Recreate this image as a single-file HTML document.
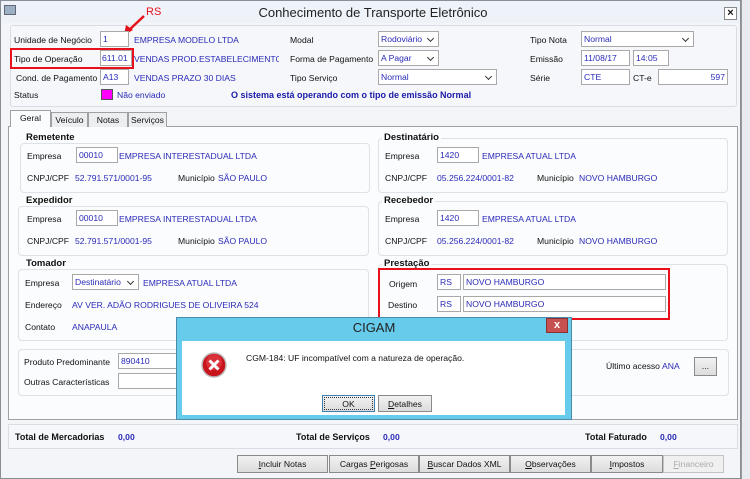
<!DOCTYPE html><html><head><meta charset="utf-8"><style>
*{box-sizing:border-box;margin:0;padding:0}
body{width:750px;height:479px;overflow:hidden;background:#dfe3e8;font-family:"Liberation Sans",sans-serif;font-size:8.6px;color:#111;position:relative}
.a{position:absolute;white-space:nowrap}
.b{color:#2a2ab8}
.in{position:absolute;background:#fff;border:1px solid #a9a9a9;color:#2a2ab8;padding:2px 2px;height:16px;line-height:11px;white-space:nowrap;overflow:hidden}
.sel:after{content:"";position:absolute;right:5px;top:4px;width:4px;height:4px;border-right:1px solid #333;border-bottom:1px solid #333;transform:rotate(45deg)}
.grp{position:absolute;border:1px solid #dde2e8;border-radius:4px;background:#fbfcfd}
.gt{position:absolute;font-weight:bold;font-size:9.5px;background:#fbfcfd;padding:0 2px}
.btn{position:absolute;top:455px;height:18px;border:1px solid #8a8a8a;background:linear-gradient(#f2f2f2,#dcdcdc);text-align:center;line-height:16px;font-size:8.6px}
.red{position:absolute;border:2px solid #e8101a}
.tab{position:absolute;top:112px;height:15px;border:1px solid #a0a0a0;border-bottom:none;background:#eceef0;text-align:center;line-height:14px}
</style></head><body>
<div class="a" style="left:0;top:0;width:741px;height:479px;background:#f3f5f8;border:1px solid #8a8f96"></div>
<div class="a" style="left:1px;top:1px;width:739px;height:22px;background:#eef3fa"></div>
<div class="a" style="left:4px;top:5px;width:12px;height:10px;background:#9cb0c4;border:1px solid #667"></div>
<div class="a" style="left:0;width:746px;top:5px;text-align:center;font-size:13px;color:#222">Conhecimento de Transporte Eletrônico</div>
<div class="a" style="left:724px;top:7px;width:13px;height:13px;border:1px solid #888;background:#fff;font-weight:bold;font-size:11px;line-height:11px;text-align:center">×</div>
<div class="a" style="left:741px;top:0;width:9px;height:479px;background:#e8ebef;border-left:1px solid #999"></div>
<div class="a" style="left:10px;top:25px;width:727px;height:82px;border:1px solid #d8dde3;border-radius:3px;background:#f5f7fa"></div>
<div class="a" style="left:146px;top:6px;color:#e8101a;font-size:11px">RS</div>
<svg class="a" style="left:122px;top:14px" width="26" height="22"><line x1="22" y1="2" x2="6" y2="17" stroke="#e8101a" stroke-width="2.5"/><polygon points="2,21 4,11 11,16" fill="#e8101a"/></svg>
<div class="a" style="left:14px;top:35px">Unidade de Negócio</div>
<div class="in" style="left:100px;top:31px;width:29px">1</div>
<div class="a b" style="left:134px;top:35px">EMPRESA MODELO LTDA</div>
<div class="a" style="left:14px;top:54px">Tipo de Operação</div>
<div class="in" style="left:100px;top:50px;width:32px;padding:2px 1px">611.01</div>
<div class="a b" style="left:134px;top:54px;width:145px;overflow:hidden">VENDAS PROD.ESTABELECIMENTO (IC</div>
<div class="red" style="left:10px;top:48px;width:124px;height:21px"></div>
<div class="a" style="left:16px;top:73px">Cond. de Pagamento</div>
<div class="in" style="left:100px;top:69px;width:29px">A13</div>
<div class="a b" style="left:134px;top:73px">VENDAS PRAZO 30 DIAS</div>
<div class="a" style="left:14px;top:90px">Status</div>
<div class="a" style="left:101px;top:89px;width:12px;height:11px;background:#f0f;border:1px solid #555"></div>
<div class="a b" style="left:117px;top:90px">Não enviado</div>
<div class="a" style="left:231px;top:90px;color:#1a1aa8;font-weight:bold;font-size:9px">O sistema está operando com o tipo de emissão Normal</div>
<div class="a" style="left:290px;top:35px">Modal</div>
<div class="in sel" style="left:378px;top:31px;width:61px">Rodoviário</div>
<div class="a" style="left:290px;top:54px">Forma de Pagamento</div>
<div class="in sel" style="left:378px;top:50px;width:61px">A Pagar</div>
<div class="a" style="left:290px;top:73px">Tipo Serviço</div>
<div class="in sel" style="left:378px;top:69px;width:119px">Normal</div>
<div class="a" style="left:530px;top:35px">Tipo Nota</div>
<div class="in sel" style="left:581px;top:31px;width:113px">Normal</div>
<div class="a" style="left:530px;top:54px">Emissão</div>
<div class="in" style="left:581px;top:50px;width:49px">11/08/17</div>
<div class="in" style="left:633px;top:50px;width:36px">14:05</div>
<div class="a" style="left:530px;top:73px">Série</div>
<div class="in" style="left:581px;top:69px;width:49px">CTE</div>
<div class="a" style="left:633px;top:73px">CT-e</div>
<div class="in" style="left:658px;top:69px;width:70px;text-align:right">597</div>
<div class="a" style="left:8px;top:126px;width:730px;height:294px;border:1px solid #a0a0a0;background:#fbfcfd"></div>
<div class="tab" style="left:10px;width:41px;top:110px;height:17px;background:#fbfcfd">Geral</div>
<div class="tab" style="left:51px;width:37px">Veículo</div>
<div class="tab" style="left:88px;width:40px">Notas</div>
<div class="tab" style="left:128px;width:39px">Serviços</div>
<div class="grp" style="left:20px;top:143px;width:350px;height:50px"></div><div class="gt" style="left:24px;top:132px">Remetente</div>
<div class="a" style="left:27px;top:151px">Empresa</div><div class="in" style="left:76px;top:147px;width:42px">00010</div><div class="a b" style="left:119px;top:151px">EMPRESA INTERESTADUAL LTDA</div>
<div class="a" style="left:27px;top:173px">CNPJ/CPF</div><div class="a b" style="left:75px;top:173px">52.791.571/0001-95</div><div class="a" style="left:178px;top:173px">Município</div><div class="a b" style="left:218px;top:173px">SÃO PAULO</div>
<div class="grp" style="left:18px;top:206px;width:351px;height:50px"></div><div class="gt" style="left:24px;top:195px">Expedidor</div>
<div class="a" style="left:27px;top:214px">Empresa</div><div class="in" style="left:76px;top:210px;width:42px">00010</div><div class="a b" style="left:119px;top:214px">EMPRESA INTERESTADUAL LTDA</div>
<div class="a" style="left:27px;top:236px">CNPJ/CPF</div><div class="a b" style="left:75px;top:236px">52.791.571/0001-95</div><div class="a" style="left:178px;top:236px">Município</div><div class="a b" style="left:218px;top:236px">SÃO PAULO</div>
<div class="grp" style="left:18px;top:269px;width:351px;height:72px"></div><div class="gt" style="left:24px;top:258px">Tomador</div>
<div class="a" style="left:25px;top:278px">Empresa</div><div class="in sel" style="left:72px;top:274px;width:67px">Destinatário</div><div class="a b" style="left:143px;top:278px">EMPRESA ATUAL LTDA</div>
<div class="a" style="left:25px;top:300px">Endereço</div><div class="a b" style="left:72px;top:300px">AV VER. ADÃO RODRIGUES DE OLIVEIRA 524</div>
<div class="a" style="left:25px;top:322px">Contato</div><div class="a b" style="left:72px;top:322px">ANAPAULA</div>
<div class="grp" style="left:378px;top:138px;width:350px;height:55px"></div><div class="gt" style="left:382px;top:132px">Destinatário</div>
<div class="a" style="left:385px;top:151px">Empresa</div><div class="in" style="left:437px;top:147px;width:42px">1420</div><div class="a b" style="left:482px;top:151px">EMPRESA ATUAL LTDA</div>
<div class="a" style="left:385px;top:173px">CNPJ/CPF</div><div class="a b" style="left:437px;top:173px">05.256.224/0001-82</div><div class="a" style="left:537px;top:173px">Município</div><div class="a b" style="left:579px;top:173px">NOVO HAMBURGO</div>
<div class="grp" style="left:378px;top:201px;width:350px;height:55px"></div><div class="gt" style="left:382px;top:195px">Recebedor</div>
<div class="a" style="left:385px;top:214px">Empresa</div><div class="in" style="left:437px;top:210px;width:42px">1420</div><div class="a b" style="left:482px;top:214px">EMPRESA ATUAL LTDA</div>
<div class="a" style="left:385px;top:236px">CNPJ/CPF</div><div class="a b" style="left:437px;top:236px">05.256.224/0001-82</div><div class="a" style="left:537px;top:236px">Município</div><div class="a b" style="left:579px;top:236px">NOVO HAMBURGO</div>
<div class="grp" style="left:378px;top:264px;width:350px;height:77px"></div><div class="gt" style="left:382px;top:258px">Prestação</div>
<div class="a" style="left:389px;top:279px">Origem</div><div class="in" style="left:437px;top:274px;width:24px">RS</div><div class="in" style="left:463px;top:274px;width:203px">NOVO HAMBURGO</div>
<div class="a" style="left:388px;top:300px">Destino</div><div class="in" style="left:437px;top:296px;width:24px">RS</div><div class="in" style="left:463px;top:296px;width:203px">NOVO HAMBURGO</div>
<div class="red" style="left:378px;top:268px;width:292px;height:52px"></div>
<div class="grp" style="left:18px;top:349px;width:711px;height:47px"></div>
<div class="a" style="left:24px;top:357px">Produto Predominante</div><div class="in" style="left:118px;top:353px;width:70px">890410</div>
<div class="a" style="left:24px;top:377px">Outras Características</div><div class="in" style="left:118px;top:373px;width:70px"></div>
<div class="a" style="left:606px;top:361px">Último acesso</div><div class="a b" style="left:662px;top:361px">ANA</div>
<div class="btn" style="left:694px;top:357px;width:23px;height:19px">...</div>
<div class="a" style="left:8px;top:424px;width:730px;height:25px;border:1px solid #d8dde3;background:#f5f7fa"></div>
<div class="a" style="left:15px;top:432px;font-weight:bold;font-size:9px">Total de Mercadorias</div><div class="a b" style="left:118px;top:432px;font-weight:bold">0,00</div>
<div class="a" style="left:296px;top:432px;font-weight:bold;font-size:9px">Total de Serviços</div><div class="a b" style="left:383px;top:432px;font-weight:bold">0,00</div>
<div class="a" style="left:585px;top:432px;font-weight:bold;font-size:9px">Total Faturado</div><div class="a b" style="left:660px;top:432px;font-weight:bold">0,00</div>
<div class="btn" style="left:237px;width:91px"><u>I</u>ncluir Notas</div>
<div class="btn" style="left:329px;width:90px">Cargas <u>P</u>erigosas</div>
<div class="btn" style="left:419px;width:91px"><u>B</u>uscar Dados XML</div>
<div class="btn" style="left:510px;width:81px"><u>O</u>bservações</div>
<div class="btn" style="left:591px;width:72px"><u>I</u>mpostos</div>
<div class="btn" style="left:663px;width:61px;color:#aaa;border-color:#c4c4c4;background:#f0f0f0"><u>F</u>inanceiro</div>
<div class="a" style="left:176px;top:317px;width:396px;height:103px;background:#67cbeb;border:1px solid #4a8aa8"></div>
<div class="a" style="left:176px;top:320px;width:396px;text-align:center;font-size:13px;color:#222">CIGAM</div>
<div class="a" style="left:546px;top:318px;width:22px;height:15px;background:#c75050;border:1px solid #8a3030;color:#fff;font-weight:bold;text-align:center;line-height:13px;font-size:11px">x</div>
<div class="a" style="left:182px;top:341px;width:383px;height:74px;background:#fff"></div>
<svg class="a" style="left:201px;top:352px" width="26" height="26"><circle cx="13" cy="13" r="12" fill="#c8141c" stroke="#bbb" stroke-width="1.5"/><circle cx="13" cy="10" r="8" fill="#e4464c" opacity=".6"/><path d="M8.5 8.5L17.5 17.5M17.5 8.5L8.5 17.5" stroke="#fff" stroke-width="3"/></svg>
<div class="a" style="left:246px;top:353px">CGM-184: UF incompatível com a natureza de operação.</div>
<div class="btn" style="left:322px;top:395px;width:53px;height:17px;border:1px solid #3c7fb1;outline:1px dotted #333;outline-offset:-3px">OK</div>
<div class="btn" style="left:378px;top:395px;width:54px;height:17px"><u>D</u>etalhes</div>
</body></html>
